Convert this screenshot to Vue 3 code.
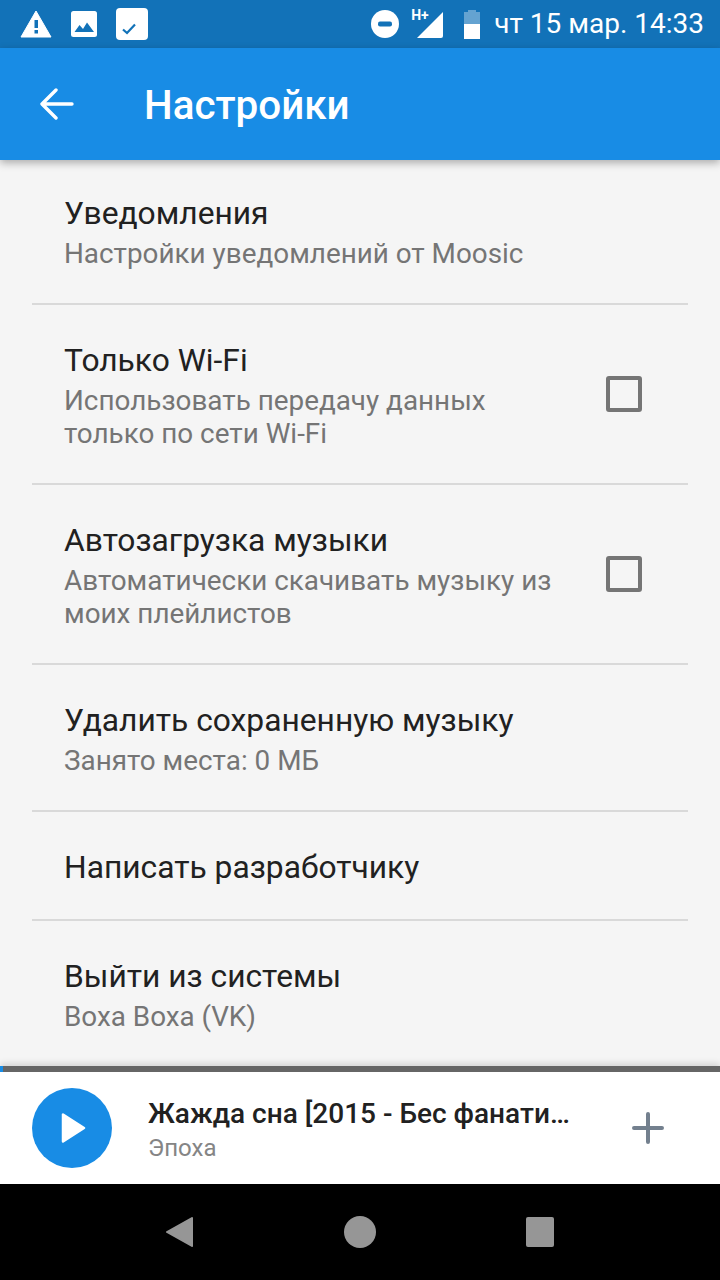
<template>
  <div class="screen">
    <div class="status-bar">
      <div class="status-left">
        <svg width="32" height="28" viewBox="0 0 32 28">
          <path d="M16 1L1 27h30z" fill="#fff" stroke="#fff" stroke-width="1" stroke-linejoin="round"/>
          <rect x="14.5" y="10" width="3.5" height="8" fill="#1272b8"/>
          <rect x="14.5" y="20" width="3.5" height="3.5" fill="#1272b8"/>
        </svg>
        <svg width="26" height="26" viewBox="0 0 26 26">
          <rect width="26" height="26" rx="2.5" fill="#fff"/>
          <path d="M3.5 21l5-7 3.5 4 4-6.5 7 9.5z" fill="#1272b8"/>
        </svg>
        <svg width="32" height="32" viewBox="0 0 32 32">
          <rect width="32" height="32" rx="4" fill="#fff"/>
          <path d="M7 21.5l4 3.5 8-8.5" fill="none" stroke="#1272b8" stroke-width="2.2"/>
        </svg>
      </div>
      <div class="status-right">
        <svg width="28" height="28" viewBox="0 0 28 28">
          <circle cx="14" cy="14" r="14" fill="#fff"/>
          <rect x="7" y="11.5" width="14" height="5" rx="2" fill="#1272b8"/>
        </svg>
        <div class="signal">
          <span class="signal-type">H+</span>
          <svg width="28" height="28" viewBox="0 0 28 28"><path d="M27 1v24a2 2 0 0 1-2 2H1z" fill="#fff"/></svg>
        </div>
        <svg class="battery" width="16" height="29" viewBox="0 0 16 29">
          <path d="M4 0h8v2h4v14H0V2h4z" fill="#fff" opacity="0.35"/>
          <rect y="14" width="16" height="15" fill="#fff"/>
        </svg>
        <span class="clock">чт 15 мар. 14:33</span>
      </div>
    </div>

    <header class="toolbar">
      <svg width="34" height="32" viewBox="0 0 34 32">
        <path d="M32 16H3M16 2L2 16l14 14" fill="none" stroke="#fff" stroke-width="3.4" stroke-linecap="round" stroke-linejoin="round"/>
      </svg>
      <h1 class="toolbar-title">Настройки</h1>
    </header>

    <ul class="settings">
      <li v-for="item in items" :key="item.title" class="setting">
        <div class="setting-text">
          <div class="setting-title">{{ item.title }}</div>
          <div v-if="item.sub" class="setting-sub">{{ item.sub }}</div>
        </div>
        <div v-if="item.check" class="checkbox"></div>
      </li>
    </ul>

    <div class="player">
      <div class="progress"><div class="progress-fill"></div></div>
      <div class="player-body">
        <div class="play">
          <svg width="26" height="30" viewBox="0 0 26 30"><path d="M2 1.5v27L23 15z" fill="#fff" stroke="#fff" stroke-width="2.5" stroke-linejoin="round"/></svg>
        </div>
        <div class="track">
          <div class="track-title">Жажда сна [2015 - Бес фанатиков в аду]</div>
          <div class="track-artist">Эпоха</div>
        </div>
        <svg width="34" height="34" viewBox="0 0 34 34">
          <path d="M17 3v28M3 17h28" stroke="#73808e" stroke-width="4" stroke-linecap="round"/>
        </svg>
      </div>
    </div>

    <div class="nav-bar">
      <svg width="30" height="32" viewBox="0 0 30 32"><path d="M28 2L3 16l25 14z" fill="#969696" stroke="#969696" stroke-width="2" stroke-linejoin="round"/></svg>
      <svg width="32" height="32" viewBox="0 0 32 32"><circle cx="16" cy="16" r="16" fill="#969696"/></svg>
      <svg width="28" height="30" viewBox="0 0 28 30"><rect width="28" height="30" rx="2" fill="#969696"/></svg>
    </div>
  </div>
</template>

<script setup>
const items = [
  { title: 'Уведомления', sub: 'Настройки уведомлений от Moosic' },
  { title: 'Только Wi-Fi', sub: 'Использовать передачу данных только по сети Wi-Fi', check: true },
  { title: 'Автозагрузка музыки', sub: 'Автоматически скачивать музыку из моих плейлистов', check: true },
  { title: 'Удалить сохраненную музыку', sub: 'Занято места: 0 МБ' },
  { title: 'Написать разработчику' },
  { title: 'Выйти из системы', sub: 'Воха Воха (VK)' },
];
</script>

<style>
html, body {
  margin: 0;
  padding: 0;
}
</style>

<style scoped>
.screen {
  display: flex;
  flex-direction: column;
  width: 720px;
  height: 1280px;
  overflow: hidden;
  background: #f5f5f5;
  font-family: Roboto, "Noto Sans", sans-serif;
}

.status-bar {
  display: flex;
  justify-content: space-between;
  align-items: center;
  flex: 0 0 48px;
  height: 48px;
  padding: 0 16px 0 20px;
  box-sizing: border-box;
  background: #1272b8;
  color: #fff;
}

.status-left,
.status-right {
  display: flex;
  align-items: center;
}

.status-left {
  gap: 19px;
}

.status-right svg {
  display: block;
}

.signal {
  position: relative;
  margin-left: 17px;
  margin-top: 2px;
}

.signal-type {
  position: absolute;
  top: -3px;
  left: -5px;
  font-size: 14px;
  font-weight: 700;
  line-height: 14px;
}

.battery {
  margin-left: 20px;
}

.clock {
  margin-left: 14px;
  font-size: 28px;
  line-height: 48px;
  white-space: nowrap;
}

.toolbar {
  position: relative;
  z-index: 2;
  display: flex;
  align-items: center;
  flex: 0 0 112px;
  padding-left: 40px;
  box-sizing: border-box;
  background: #188ce5;
  box-shadow: 0 3px 8px rgba(0, 0, 0, 0.3);
}

.toolbar-title {
  margin: 4px 0 0 70px;
  color: #fff;
  font-size: 40.4px;
  font-weight: 500;
  line-height: 44px;
}

.settings {
  flex: 1;
  min-height: 0;
  margin: 0;
  padding: 0 32px;
  list-style: none;
}

.setting {
  display: flex;
  align-items: center;
  padding: 37px 46px 32px 32px;
  border-bottom: 2px solid #d9d9d9;
}

.setting:first-child {
  padding-top: 35px;
  padding-bottom: 32px;
}

.setting:last-child {
  border-bottom: none;
}

.setting-text {
  flex: 1;
  min-width: 0;
}

.setting-title {
  color: #212121;
  font-size: 31.75px;
  line-height: 38px;
}

.setting-sub {
  margin: 4px 0 1px;
  max-width: 500px;
  color: #757575;
  font-size: 27.85px;
  line-height: 33px;
}

.checkbox {
  flex: none;
  width: 28px;
  height: 28px;
  margin-top: -6px;
  border: 4px solid #757575;
  border-radius: 3px;
}

.player {
  position: relative;
  flex: 0 0 118px;
  background: #fff;
  box-shadow: 0 -3px 6px rgba(0, 0, 0, 0.12);
}

.progress {
  height: 6px;
  background: #666;
}

.progress-fill {
  width: 3px;
  height: 100%;
  background: #188ce5;
}

.player-body {
  display: flex;
  align-items: center;
  height: 112px;
  padding: 0 55px 0 32px;
  box-sizing: border-box;
}

.play {
  display: flex;
  justify-content: center;
  align-items: center;
  flex: none;
  width: 80px;
  height: 80px;
  padding-left: 4px;
  box-sizing: border-box;
  border-radius: 50%;
  background: #188ce5;
}

.track {
  flex: 1;
  min-width: 0;
  margin: 0 50px 0 36px;
  padding-top: 4px;
}

.track-title {
  overflow: hidden;
  color: #212121;
  font-size: 28px;
  font-weight: 500;
  line-height: 36px;
  white-space: nowrap;
  text-overflow: ellipsis;
}

.track-artist {
  color: #858585;
  font-size: 24px;
  line-height: 32px;
}

.nav-bar {
  display: flex;
  justify-content: center;
  align-items: center;
  gap: 150px;
  flex: 0 0 96px;
  padding-right: 2px;
  box-sizing: border-box;
  background: #000;
}
</style>
